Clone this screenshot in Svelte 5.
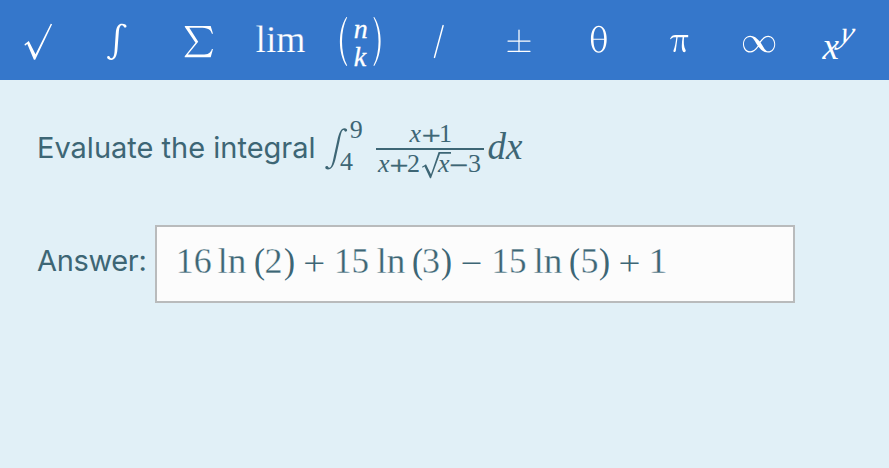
<script>
  // Each token: text, left edge, advance width, optional class
  const answer = [
    ['16', 18.8, 36], ['ln', 60.5, 29], ['(', 97, 11, 'paren'], ['2', 107.5, 18],
    [')', 127, 11, 'paren'], ['+', 143.7, 27, 'op'],
    ['15', 176.9, 35], ['ln', 219.5, 29], ['(', 255, 11, 'paren'], ['3', 265, 18],
    [')', 284, 11, 'paren'], ['−', 301, 27, 'op'],
    ['15', 334.5, 35], ['ln', 376.5, 29], ['(', 412, 11, 'paren'], ['5', 423.5, 18],
    [')', 442, 11, 'paren'], ['+', 459, 27, 'op'], ['1', 491.5, 19]
  ];
</script>

<div class="page">
  <nav class="toolbar">
    <button aria-label="square root"><svg viewBox="0 0 80 80"><path d="M25.5 44.2 29.8 41 36.5 54.2 51.8 23.8 53.1 24.3 36.2 59.8H34.9L28.3 44.1 26 45.7Z" /></svg></button>
    <button aria-label="integral"><svg viewBox="0 0 80 80"><path d="M40.2 57.5C41 59.2 44.2 58.8 44.7 52L45.9 34C46.4 26 49 23.7 52.3 23.8C55 23.9 56.9 25 56.7 26.4C56.5 28 53.9 28 53.8 26.3C52 24 49.5 25.5 49.1 31L47.7 49C47.1 57 44.5 60 41.5 59.9C38.9 59.9 37.1 58.6 37.3 57C37.6 55.5 40.1 55.7 40.2 57.5Z" transform="translate(-9.2 0)" /></svg></button>
    <button aria-label="sum"><svg viewBox="0 0 80 80"><path d="M26 26H51.7L54 33.8H52.9C51.4 29 48.5 27.7 41 27.7H30.3L39.2 41.7 28.8 54.6H43C49.5 54.6 51.5 53 52.9 49H54L51.7 57.2H25.7V56.2L36.5 42.8 25.7 26.8Z" /></svg></button>
    <button aria-label="limit"><svg viewBox="0 0 80 80"><text class="upright" x="16.5" y="52.4" textLength="50" lengthAdjust="spacingAndGlyphs">lim</text></svg></button>
    <button aria-label="binomial"><svg viewBox="0 0 80 80"><path d="M28.2 17.3C21.3 30 21.3 53 28.2 65.6L27.4 66C18.8 53 18.8 30 27.4 17ZM54.4 17.3C61.3 30 61.3 53 54.4 65.6L55.2 66C63.8 53 63.8 30 55.2 17Z" /><text class="italic small" x="34.7" y="38.3">n</text><text class="italic small" x="34.7" y="66">k</text></svg></button>
    <button aria-label="divide"><svg viewBox="0 0 80 80"><path class="line" d="M35.5 57.4 44.1 25.6" /></svg></button>
    <button aria-label="plus or minus"><svg viewBox="0 0 80 80"><path class="line thin" d="M29 41H51M40 30V51.5M29 51.3H51" /></svg></button>
    <button aria-label="theta"><svg viewBox="0 0 80 80"><path fill-rule="evenodd" d="M39.8 25.8C44.8 25.8 47.7 31.5 47.7 39.2S44.8 52.7 39.8 52.7 31.9 47 31.9 39.2 34.8 25.8 39.8 25.8ZM39.8 27C36 27 34.5 32.5 34.5 38.7H45.1C45.1 32.5 43.6 27 39.8 27ZM34.5 39.8C34.5 46 36 51.5 39.8 51.5S45.1 46 45.1 39.8Z" /></svg></button>
    <button aria-label="pi"><svg viewBox="0 0 80 80"><path d="M31 39C32.4 36 34 35.1 36.5 35.1H49.2V37.2H45.1C44.6 42 44.5 46 46.7 50.3C46.9 51.4 46.3 52.2 45.3 52.2C43.5 52.2 42.8 49.3 42.8 46C42.8 43 43.2 40 43.6 37.2H38.6C37.9 42.5 37.3 47 36.8 50.8C36.5 52.4 34.3 52.5 34.4 50.7C36 47 36.8 42 37.3 37.2H36C33.9 37.2 33 37.6 31.8 39.2Z" /></svg></button>
    <button aria-label="infinity"><svg viewBox="0 0 80 80"><path fill-rule="evenodd" d="M24 44.2C24 39.5 27 35.8 31.2 35.8C35 35.8 37.8 38.1 40.8 41.6C43.5 38 46 35.8 49.2 35.8C53.2 35.8 56.2 39.5 56.2 44.2S53.2 52.6 49 52.6C45 52.6 42.4 50.2 39.5 46.7C36.8 50.3 34.3 52.6 31.1 52.6C27 52.6 24 48.8 24 44.2ZM31 37C27.5 37 25 40 25 44.1S27.8 51.3 31.2 51.3C34 51.3 36.5 49 38.8 45.8C36 42 34.5 37 31 37ZM49.2 37C46.3 37 43.8 39.3 41.6 42.5C44 46 46 51.3 49.2 51.3C52.7 51.3 55.2 48.2 55.2 44.2S52.5 37 49.2 37Z" /></svg></button>
    <button aria-label="power"><svg viewBox="0 0 80 80"><text class="italic base" x="23.5" y="58.5">x</text><text class="italic sup" transform="translate(39.3 43.3) skewX(-14)">y</text></svg></button>
  </nav>

  <main>
    <div class="question">
      <span class="prompt">Evaluate the integral</span>
      <svg class="formula" width="210" height="76" viewBox="320 112 210 76">
        <path d="M328.3 167.3C331 169 332.2 164.5 333.8 156.5L337.2 141C339 132.5 341 128.2 344.5 128.2C346.3 128.2 347.4 129.3 347.1 130.6C346.7 132.3 344.4 132 344.2 130.3C342 129 341.2 133 339.6 140.5L336 157C334.2 165.5 331.6 169.5 328 169.5C326 169.5 325 168.4 325.3 167.1C325.8 165.5 328 165.6 328.3 167.3Z" />
        <text class="digit" x="349.8" y="138">9</text>
        <text class="digit" x="340" y="170">4</text>
        <text class="italic digit" x="409.5" y="142">x</text>
        <text class="digit sign" x="421.7" y="143.6" textLength="19" lengthAdjust="spacingAndGlyphs">+</text>
        <text class="digit" x="439" y="142">1</text>
        <rect x="376" y="148" width="108" height="2" />
        <text class="italic digit" x="378" y="172">x</text>
        <text class="digit sign" x="389.5" y="173.6" textLength="19" lengthAdjust="spacingAndGlyphs">+</text>
        <text class="digit" x="407" y="172">2</text>
        <path d="M422 166.8 426 164.3 431 174.2 438.6 152H451V153.8H440L431 178.3H430L424.5 166.6 422.5 167.8Z" />
        <text class="italic digit" x="438" y="172">x</text>
        <text class="digit sign" x="449.5" y="173.6" textLength="19" lengthAdjust="spacingAndGlyphs">−</text>
        <text class="digit" x="468" y="172">3</text>
        <text class="italic large" x="487.5" y="158.5">dx</text>
      </svg>
    </div>

    <div class="response">
      <span class="prompt">Answer:</span>
      <div class="field">
        <svg width="636" height="74" viewBox="0 0 636 74">
          {#each answer as [text, x, width, kind]}
            <text class={kind ?? 'number'} {x} y={kind === 'op' ? 46.8 : 46.3} textLength={width} lengthAdjust="spacingAndGlyphs">{text}</text>
          {/each}
        </svg>
      </div>
    </div>
  </main>
</div>

<style>
  .page {
    width: 889px;
    height: 468px;
    overflow: hidden;
    background: #e1f0f7;
    color: #3d6675;
    font-family: Inter, "Liberation Sans", sans-serif;
  }
  .toolbar {
    display: grid;
    grid-template-columns: repeat(11, 80px);
    margin-left: -1px;
    width: 890px;
    height: 80px;
    background: #3577cb;
  }
  button {
    padding: 0;
    border: 0;
    background: none;
    color: #fff;
    height: 80px;
  }
  svg { display: block; fill: currentColor; }
  button svg { width: 80px; height: 80px; }
  .line { fill: none; stroke: currentColor; stroke-width: 1.5; stroke-linecap: round; }
  .thin { stroke-width: 1.25; }
  text { font-family: "Liberation Serif", serif; }
  .upright { font-size: 38px; stroke: #3577cb; stroke-width: 0.25px; }
  .italic { font-style: italic; font-size: 38px; }
  .small { font-size: 28px; stroke: currentColor; stroke-width: 0.3px; }
  .base { font-size: 37px; }
  .sup { font-size: 31px; }
  .digit { font-size: 26px; }
  .sign { stroke: currentColor; stroke-width: 0.35px; }
  .large { font-size: 37px; }
  .number { font-size: 35px; stroke: #fcfcfc; stroke-width: 0.3px; }
  .paren { font-size: 35px; }
  .op { font-size: 38px; font-family: Inter, sans-serif; font-weight: 200; }
  main { padding: 32px 0 0 37px; }
  .question { display: flex; height: 76px; }
  .question .prompt { width: 283px; line-height: 71px; }
  .prompt { font-size: 29px; white-space: nowrap; }
  .response { display: flex; margin-top: 37px; }
  .response .prompt { width: 118px; line-height: 71px; letter-spacing: -0.35px; }
  .field {
    box-sizing: border-box;
    width: 640px;
    height: 78px;
    border: 2px solid #b9bbbc;
    background: #fcfcfc;
  }
</style>
